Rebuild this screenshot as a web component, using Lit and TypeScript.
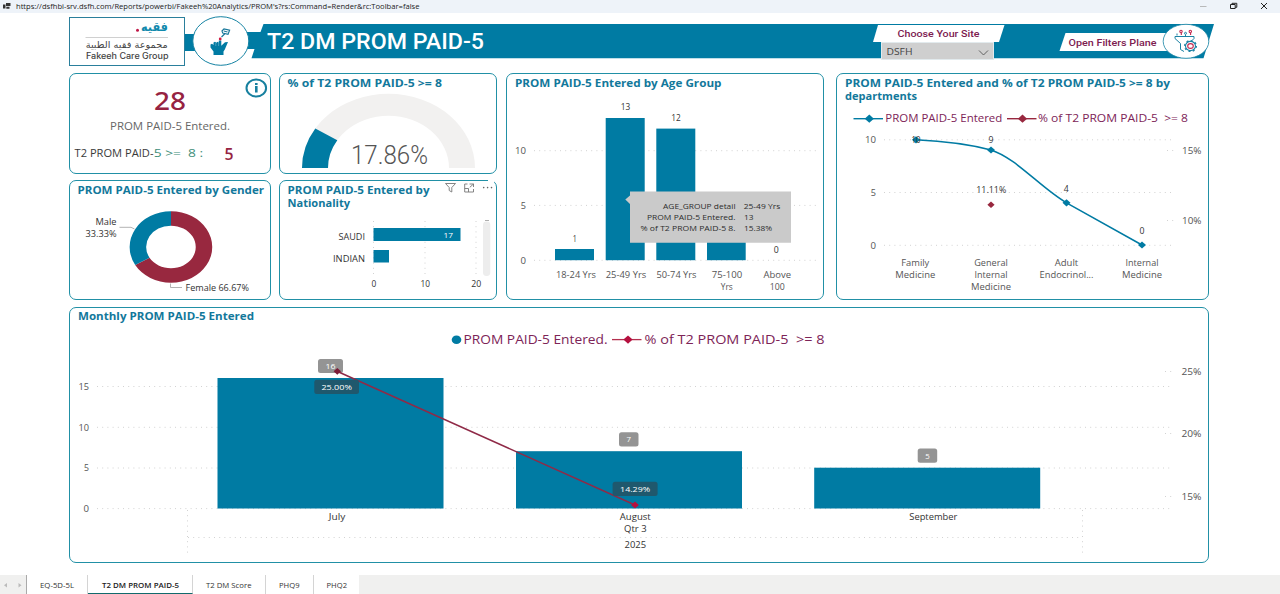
import { LitElement, html, svg, css } from "lit";
import { customElement } from "lit/decorators.js";

const TEAL = "#007ba3";
const MAROON = "#98283f";

/* Text fitted to a given width; mode picks the anchor. */
const t = (x: number, y: number, w: number, s: string, cls = "", mode = "start") =>
  svg`<text x=${x} y=${y} textLength=${w} lengthAdjust="spacingAndGlyphs" text-anchor=${mode} class=${cls} xml:space="preserve">${s}</text>`;
const m = (x: number, y: number, w: number, s: string, cls = "") => t(x, y, w, s, cls, "middle");
const grid = (x1: number, x2: number, y: number) =>
  svg`<line x1=${x1} x2=${x2} y1=${y} y2=${y} class="grid"/>`;
const vgrid = (x: number, y1: number, y2: number) =>
  svg`<line x1=${x} x2=${x} y1=${y1} y2=${y2} class="grid"/>`;
const bar = (x: number, y: number, w: number, h: number) =>
  svg`<rect x=${x} y=${y} width=${w} height=${h} fill=${TEAL}/>`;
const diamond = (x: number, y: number, r: number, fill: string) =>
  svg`<path d=${`M${x - r} ${y}L${x} ${y - r * 0.9}L${x + r} ${y}L${x} ${y + r * 0.9}Z`} fill=${fill}/>`;

const textCss = css`
  :host { display: block; }
  svg { display: block; width: 100%; height: 100%; overflow: visible; }
  text { font-family: "Open Sans", "Noto Sans", sans-serif; font-size: 9px; fill: #3f3f3f; white-space: pre; }
  .title { font-size: 10.3px; font-weight: 700; fill: #12789b; }
  .axis { font-size: 8.6px; fill: #555; }
  .lab { font-size: 8.1px; fill: #333; }
  .grid { stroke: #d2d2d2; stroke-width: 1; stroke-dasharray: 1 4.2; }
  .leg { font-size: 11px; fill: #7d2457; }
  .leg2 { font-size: 12.4px; fill: #7d2457; }
  .white { font-size: 8px; fill: #fff; }
`;

@customElement("app-banner")
class AppBanner extends LitElement {
  static styles = [textCss, css`
    .row { display: flex; height: 49px; }
    .brand { box-sizing: border-box; width: 116px; border: 1px solid #2a7f9c; background: #fff; }
    .rest { flex: 1; }
    .ar { font-family: "DejaVu Sans", sans-serif; font-size: 9.5px; fill: #444; }
    .arb { font-family: "DejaVu Sans", sans-serif; font-size: 12px; font-weight: 700; fill: #1189ad; }
    .en { font-family: Inter, sans-serif; font-size: 8.3px; font-weight: 500; fill: #444; }
    .h1 { font-family: Roboto, sans-serif; font-size: 21.5px; font-weight: 500; fill: #fff; }
    .btn { font-family: Roboto, sans-serif; font-size: 9.4px; font-weight: 500; fill: #7d2050; }
    .sel { font-size: 8.4px; fill: #444; }
  `];
  render() {
    return html`<div class="row">
      <div class="brand"><svg viewBox="70 18 114 47">
        ${t(168, 30.5, 27, "فقيه", "arb", "end")}
        <circle cx="137.5" cy="30.3" r="1.5" fill="#c01848"/>
        <line x1="85.5" x2="168" y1="37.5" y2="37.5" stroke="#c4c4c4" stroke-width=".8"/>
        ${m(126.7, 48.4, 82, "مجموعة فقيه الطبية", "ar")}
        ${t(86, 59, 82.5, "Fakeeh Care Group", "en")}
      </svg></div>
      <div class="rest"><svg viewBox="185 17 1024 49">
        <path d="M185 34H200V51H185ZM240 32H260.5L263.5 24H1214L1203.5 58.3H251.5L254.5 49H240Z" fill=${TEAL}/>
        <ellipse cx="220.8" cy="41" rx="28" ry="24.3" fill="#fff" stroke="#1583a3"/>
        <path d="M213.5 55V51.5L210.5 47.5V44.5L212 43.8L213.5 45V42.5L215 41.8L216.3 42.8L217.5 41.8L218.8 42.8V40.5H221.3V45.8L225 42.3L228 42L224.8 49.5L223.5 51.5V55Z" fill=${TEAL}/>
        <path d="M215.8 43V46M218.6 43V46" stroke="#8dc3d6" stroke-width=".5"/>
        <circle cx="220.2" cy="39" r="1.4" fill="#cf1d45"/>
        <path d="M222 31L224 28.8L229.6 30.1L228 34.4L222.7 33.1ZM224.8 33.8L221.5 37M223.8 31L227.5 32" fill="none" stroke="#17779a" stroke-width="1.2"/>
        ${t(267, 49, 217, "T2 DM PROM PAID-5", "h1")}
        <path d="M878 25H1004.5L999 42H873Z" fill="#fff"/>
        ${t(897.5, 37, 82, "Choose Your Site", "btn")}
        <rect x="881.5" y="42.5" width="112" height="17" fill="#cfcfcf" stroke="#e2eaed"/>
        ${t(886.5, 55, 26, "DSFH", "sel")}
        <path d="M979 50.5L983.5 55L988 50.5" fill="none" stroke="#555" stroke-width=".9"/>
        <path d="M1065.5 33H1170V51H1059.5Z" fill="#fff"/>
        ${t(1068.5, 45.8, 88, "Open Filters Plane", "btn")}
        <ellipse cx="1186" cy="41.3" rx="22.8" ry="17" fill="#fff" stroke="#1583a3" stroke-width=".8"/>
        <g fill="none" stroke="#1c82a4" stroke-width="1">
          <path d="M1184 51.5L1180.5 49.5V43.5L1175 38.5V36.5H1194V38.5L1192.5 40"/>
          <path d="M1177 35.5V33.5M1185.5 36V34.5"/><circle cx="1185.5" cy="33.3" r="1"/>
          <ellipse cx="1190.5" cy="46" rx="5" ry="4.6" stroke-width="1.1"/>
          <ellipse cx="1190.5" cy="46" rx="5.9" ry="5.5" stroke-width="1.2" stroke-dasharray="2 2.4"/>
        </g>
        <g fill="none" stroke="#c4264e" stroke-width="1.1">
          <ellipse cx="1190.5" cy="46" rx="2.8" ry="2.4"/>
          <circle cx="1181" cy="31.5" r="1.2"/><circle cx="1190.3" cy="31.5" r="1.2"/>
          <path d="M1181.3 33V35M1190.6 33V35"/>
        </g>
      </svg></div>
    </div>`;
  }
}

@customElement("app-board")
class AppBoard extends LitElement {
  static styles = [textCss, css`
    .board { display: grid; grid-template-columns: 210px 227px 330px 373px; grid-template-rows: 101px 120px 256px;
      row-gap: 6px; }
    .card { box-sizing: border-box; border: 1px solid #2190a6; border-radius: 7px; background: #fff; min-width: 0; }
    .c1 { margin-right: 8px; }
    .c2 { margin-right: 9px; }
    .c3 { margin-right: 12px; }
    .tall { grid-row: span 2; }
    .wide { grid-column: 1 / -1; margin-top: 1px; height: 256px; }
    .big { font-size: 26px; font-weight: 500; fill: #962342; font-family: "Noto Sans", sans-serif; }
    .five { font-size: 15.5px; font-weight: 600; fill: #962342; }
    .sub { font-size: 10.4px; fill: #666; }
    .t2 { font-size: 10px; fill: #3a3a3a; }
    .green { fill: #3d8d78; }
    .pct { font-family: Roboto, sans-serif; font-weight: 300; font-size: 25px; fill: #555; }
    .tip { font-size: 7px; fill: #2c2c2c; }
  `];

  private summary() {
    return html`<div class="card c1"><svg viewBox="70 74 200 99">
      ${m(170, 110, 32, "28", "big")}
      ${t(110, 130, 120, "PROM PAID-5 Entered.", "sub")}
      ${t(74.5, 157.3, 79, "T2 PROM PAID-", "t2")}
      ${t(153.7, 157.3, 49.5, "5 >=  8 :", "t2 green")}
      ${t(224.5, 160, 9, "5", "five")}
      <ellipse cx="256.3" cy="88" rx="9.8" ry="8.5" fill="#fff" stroke="#17809f" stroke-width="2"/>
      <path d="M255 86H257.6V92.5H255ZM255 83H257.6V85H255Z" fill="#17809f"/>
    </svg></div>`;
  }

  private gauge() {
    return html`<div class="card c2"><svg viewBox="280 74 216 99">
      ${t(287.5, 87, 154.5, "% of T2 PROM PAID-5 >= 8", "title")}
      <path d="M302 168A86.5 74.3 0 0 1 475 168H449A60.5 52.3 0 0 0 328 168Z" fill="#f2f1f0"/>
      <path d="M302 168A86.5 74.3 0 0 1 315.3 128.5L337.3 140.2A60.5 52.3 0 0 0 328 168Z" fill=${TEAL}/>
      ${t(351, 163.5, 77, "17.86%", "pct")}
    </svg></div>`;
  }

  private gender() {
    return html`<div class="card c1"><svg viewBox="70 181 200 118">
      ${t(77.5, 193.7, 186.5, "PROM PAID-5 Entered by Gender", "title")}
      <path d="M171 211.3A41.3 35.7 0 1 1 135.2 264.9L149.5 257.7A24.8 21.3 0 1 0 171 225.7Z" fill=${MAROON}/>
      <path d="M171 211.3A41.3 35.7 0 0 0 135.2 264.9L149.5 257.7A24.8 21.3 0 0 1 171 225.7Z" fill=${TEAL}/>
      <path d="M119.5 227.3H131L134.5 229M170.5 283.5V287.5H182" fill="none" stroke="#aaa" stroke-width=".9"/>
      ${t(116.5, 225.4, 21, "Male", "lab", "end")}
      ${t(116.5, 237.3, 31, "33.33%", "lab", "end")}
      ${t(185.5, 291.3, 63.5, "Female 66.67%", "lab")}
    </svg></div>`;
  }

  private nationality() {
    return html`<div class="card c2"><svg viewBox="280 181 216 118">
      ${t(287.5, 193.7, 142, "PROM PAID-5 Entered by", "title")}
      ${t(287.5, 207, 62.5, "Nationality", "title")}
      ${[373.5, 425, 476].map((x) => vgrid(x, 221, 276))}
      ${bar(373.5, 228, 87, 13)}${bar(373.5, 250, 15.5, 12.5)}
      ${t(453, 237.6, 9.5, "17", "white", "end")}
      ${t(365, 240.3, 26.5, "SAUDI", "lab", "end")}
      ${t(365, 261.5, 32, "INDIAN", "lab", "end")}
      ${m(374, 287, 4.8, "0", "lab")}${m(425.3, 287, 9.5, "10", "lab")}${m(476.3, 287, 10, "20", "lab")}
      <rect x="483" y="221.5" width="7.3" height="54.5" rx="3.4" fill="#ededed"/>
      <path d="M485 220.5H489" stroke="#999" stroke-width=".8"/>
      <rect x="442" y="178" width="52" height="14" fill="#fff"/>
      <path d="M442 180.5H488" stroke="#2190a6"/>
      <g fill="none" stroke="#777" stroke-width=".9">
        <path d="M445.5 183.5H455.5L451.8 187.5V192L449.2 190.5V187.5Z"/>
        <path d="M467.5 184H464.7V192H473.5V189M469.5 184H473.5V187M473.5 184L469.8 187.3M464.7 188.5H468.5V192"/>
      </g>
      <g fill="#666"><circle cx="483.7" cy="187.6" r=".8"/><circle cx="487.6" cy="187.6" r=".8"/><circle cx="491.5" cy="187.6" r=".8"/></g>
    </svg></div>`;
  }

  private ages() {
    return html`<div class="card tall c3"><svg viewBox="507 74 316 225">
      ${t(515, 87, 206.5, "PROM PAID-5 Entered by Age Group", "title")}
      ${grid(534, 816, 150.7)}${grid(534, 816, 205.4)}${grid(534, 816, 260.3)}
      ${t(526, 154, 11, "10", "axis", "end")}${t(526, 208.8, 5.2, "5", "axis", "end")}${t(526, 263.6, 5.5, "0", "axis", "end")}
      ${bar(555, 249, 39, 11.2)}${bar(605.7, 118, 39, 142.2)}${bar(656.3, 128.6, 39, 131.6)}${bar(707, 238, 38.7, 22.2)}
      ${m(574.7, 242, 4, "1", "lab")}${m(625.5, 110.2, 9.5, "13", "lab")}${m(676, 121.3, 9.5, "12", "lab")}${m(776.3, 252.8, 5, "0", "lab")}
      ${m(576, 278, 40, "18-24 Yrs", "axis")}${m(626, 278, 40.5, "25-49 Yrs", "axis")}${m(676.5, 278, 40, "50-74 Yrs", "axis")}
      ${m(727, 278, 30.5, "75-100", "axis")}${m(726.8, 289.5, 12, "Yrs", "axis")}
      ${m(777.3, 278, 27.5, "Above", "axis")}${m(777.3, 289.5, 15, "100", "axis")}
      <path d="M630 191.5H791V242.8H630V204L625.3 199.5L630 195.5Z" fill="#cacaca"/>
      ${t(735.5, 209, 72.5, "AGE_GROUP detail", "tip", "end")}${t(743.7, 209, 36.5, "25-49 Yrs", "tip")}
      ${t(735.5, 220, 88.5, "PROM PAID-5 Entered.", "tip", "end")}${t(744, 220, 9.5, "13", "tip")}
      ${t(735.5, 231, 95, "% of T2 PROM PAID-5 8.", "tip", "end")}${t(744, 231, 28, "15.38%", "tip")}
    </svg></div>`;
  }

  private departments() {
    return html`<div class="card tall"><svg viewBox="837 74 371 225">
      ${t(845, 87, 325, "PROM PAID-5 Entered and % of T2 PROM PAID-5 >= 8 by", "title")}
      ${t(845, 100, 72, "departments", "title")}
      <path d="M853.5 118.7H883" stroke=${TEAL} stroke-width="1.4"/>${diamond(869.3, 118.7, 4.6, TEAL)}
      ${t(885.3, 122.3, 117, "PROM PAID-5 Entered", "leg")}
      <path d="M1007 118.7H1036.5" stroke=${MAROON} stroke-width="1.4"/>${diamond(1022.5, 118.7, 4.6, MAROON)}
      ${t(1038, 122.3, 150, "% of T2 PROM PAID-5  >= 8", "leg")}
      ${grid(884, 1171, 139.8)}${grid(884, 1171, 192.5)}${grid(884, 1171, 245.3)}
      ${grid(1167, 1175, 150.5)}${grid(1167, 1175, 220.5)}
      ${t(876, 143.2, 11, "10", "axis", "end")}${t(876, 195.8, 5.2, "5", "axis", "end")}${t(876, 248.7, 5.5, "0", "axis", "end")}
      ${t(1182, 154, 19.5, "15%", "axis")}${t(1182, 223.8, 19.5, "10%", "axis")}
      <path d="M916 139.8C941 141 966 143.5 991 150C1016 158 1041 188 1066.5 202.8C1092 217 1117 231 1142 245" fill="none" stroke=${TEAL} stroke-width="1.5"/>
      ${[[916, 139.8], [991, 150], [1066.5, 202.8], [1142, 245]].map(([x, y]) => diamond(x, y, 4, TEAL))}
      ${m(916, 142.8, 9, "10", "lab")}
      ${diamond(991, 204.7, 3.6, MAROON)}
      ${m(991, 143, 5, "9", "lab")}${m(1066.3, 192, 5, "4", "lab")}${m(1142, 234, 5, "0", "lab")}
      ${m(991.3, 193.2, 30, "11.11%", "lab")}
      ${m(915.3, 266, 28, "Family", "axis")}${m(915.3, 278, 40, "Medicine", "axis")}
      ${m(991, 266, 33.5, "General", "axis")}${m(991, 278, 33, "Internal", "axis")}${m(991, 289.7, 40, "Medicine", "axis")}
      ${m(1066.5, 266, 23.5, "Adult", "axis")}${m(1066.5, 278, 54, "Endocrinol...", "axis")}
      ${m(1142, 266, 33, "Internal", "axis")}${m(1142, 278, 40, "Medicine", "axis")}
    </svg></div>`;
  }

  private monthly() {
    const tag = (x: number, y: number, w: number, h: number, fill: string, s: string, tw: number) => svg`
      <rect x=${x} y=${y} width=${w} height=${h} rx="2.5" fill=${fill}/>${m(x + w / 2, y + h / 2 + 3, tw, s, "white")}`;
    return html`<div class="card wide"><svg viewBox="70 308 1138 254">
      ${t(78, 320, 176, "Monthly PROM PAID-5 Entered", "title")}
      <ellipse cx="456.5" cy="339.7" rx="4.8" ry="4.3" fill=${TEAL}/>
      ${t(463.5, 344.3, 144, "PROM PAID-5 Entered.", "leg2")}
      <path d="M612 339.6H641.5" stroke="#b4304f" stroke-width="1.3"/>${diamond(628, 339.6, 4.6, "#b5103f")}
      ${t(644.5, 344.3, 180, "% of T2 PROM PAID-5  >= 8", "leg2")}
      ${[386.5, 427.3, 468, 508.6].map((y) => grid(97, 1173, y))}
      ${[371.5, 433.5, 496.5].map((y) => grid(1165, 1174, y))}
      ${vgrid(187.5, 510, 556)}${vgrid(1082.5, 510, 556)}${grid(188, 1082, 537.5)}
      ${t(89, 389.8, 10.5, "15", "axis", "end")}${t(89, 430.5, 10.5, "10", "axis", "end")}
      ${t(89, 471.3, 5, "5", "axis", "end")}${t(89, 511.9, 5.5, "0", "axis", "end")}
      ${t(1181.5, 374.6, 20, "25%", "axis")}${t(1181.5, 436.8, 20, "20%", "axis")}${t(1181.5, 499.6, 20, "15%", "axis")}
      ${bar(217.5, 378, 226, 130.5)}${bar(516, 451.2, 226, 57.3)}${bar(814.2, 467.7, 226, 40.8)}
      ${tag(318, 359, 25, 14, "#949494", "16", 10)}
      ${tag(619, 432.2, 19.5, 14.3, "#949494", "7", 4.5)}
      ${tag(917.7, 448.5, 19.5, 14.3, "#949494", "5", 4.5)}
      <path d="M337 371.3L635 505" stroke="#8f2a47" stroke-width="1.5"/>
      ${tag(314.3, 379.7, 44.7, 14.3, "#1f586d", "25.00%", 30.5)}
      ${tag(612.6, 481.7, 45, 14.3, "#1f586d", "14.29%", 30)}
      ${diamond(337.3, 371.3, 3.7, "#7d1c38")}${diamond(635, 505, 3.9, "#b5103f")}
      ${m(337, 520.3, 16.5, "July", "lab")}${m(635.3, 520.3, 31, "August", "lab")}${m(933.3, 520.3, 48, "September", "lab")}
      ${m(635.3, 532.3, 22.5, "Qtr 3", "lab")}${m(635.3, 547.8, 21.5, "2025", "lab")}
    </svg></div>`;
  }

  render() {
    return html`<div class="board">${this.summary()}${this.gauge()}${this.ages()}${this.departments()}
      ${this.gender()}${this.nationality()}${this.monthly()}</div>`;
  }
}

@customElement("app-root")
class AppRoot extends LitElement {
  static styles = [textCss, css`
    :host { display: flex; flex-direction: column; height: 594px; background: #fff; overflow: hidden; }
    .bar { height: 13px; background: #eef3f9; flex: none; }
    .main { flex: 1; padding: 4px 71px 0 69px; }
    app-board { margin-top: 7px; }
    .foot { height: 19px; flex: none; display: flex; background: #f0f0ef; }
    .arrows { width: 26px; border-right: 1px solid #aaa; }
    .tab { box-sizing: border-box; background: #fff; border-right: 1px solid #d4d4d4; }
    .tab.last { border-right: 0; }
    .tab.on { border-bottom: 1.5px solid #126a6c; }
    .url { font-size: 7.5px; fill: #222; }
    .lbl { font-size: 7px; fill: #333; }
    .lbl.on { font-weight: 600; fill: #222; }
  `];
  private tabs = [
    { s: "EQ-5D-5L", w: 61, tx: 13, tw: 34 },
    { s: "T2 DM PROM PAID-5", w: 105, tx: 14, tw: 77, on: true },
    { s: "T2 DM Score", w: 73, tx: 13, tw: 45.5 },
    { s: "PHQ9", w: 48, tx: 13, tw: 20.5 },
    { s: "PHQ2", w: 45, tx: 12.5, tw: 20.5 },
  ];
  render() {
    return html`
      <div class="bar"><svg viewBox="0 0 1280 13">
        <path d="M3 4.5H5.5V8.5H3ZM6 3H10.5V6H6ZM6.3 6.7H9.5V8.7H6.3Z" fill="#333"/>
        ${t(16, 9.3, 403.5, "https://dsfhbi-srv.dsfh.com/Reports/powerbi/Fakeeh%20Analytics/PROM's?rs:Command=Render&rc:Toolbar=false", "url")}
        <path d="M1200 6.5H1206.5" stroke="#aaa" stroke-width=".8"/>
        <g fill="none" stroke="#222" stroke-width="1"><path d="M1230.5 4.5H1235.2V8.5H1230.5ZM1232 4.3V3.3H1236.8V7.3H1235.3"/>
        <path d="M1261 3L1267 9M1267 3L1261 9"/></g>
      </svg></div>
      <div class="main"><app-banner></app-banner><app-board></app-board></div>
      <div class="foot">
        <div class="arrows"><svg viewBox="0 0 26 19"><path d="M7 8L4 10.3L7 12.6ZM18.5 8L21.5 10.3L18.5 12.6Z" fill="#bbb"/></svg></div>
        ${this.tabs.map((b, i) => html`<div class="tab ${b.on ? "on" : ""} ${i === 4 ? "last" : ""}" style="width:${b.w}px">
          <svg>${t(b.tx, 13, b.tw, b.s, b.on ? "lbl on" : "lbl")}</svg></div>`)}
      </div>`;
  }
}
